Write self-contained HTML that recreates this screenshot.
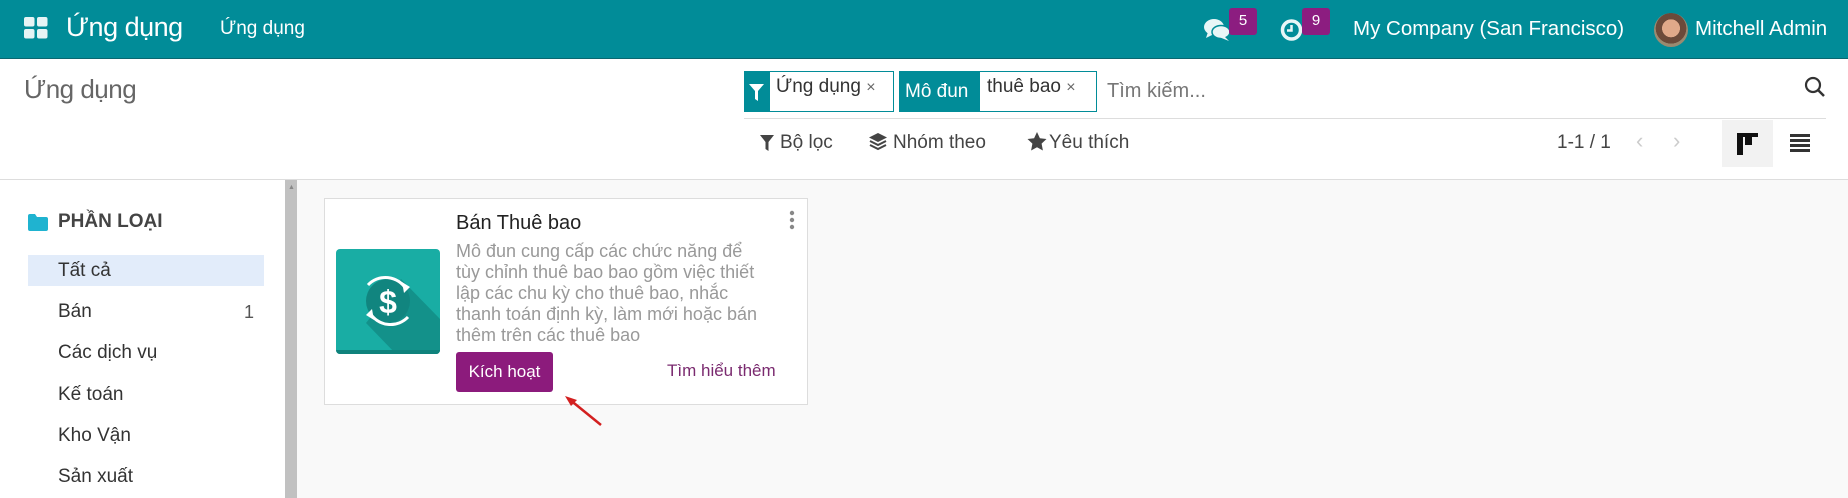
<!DOCTYPE html>
<html><head><meta charset="utf-8"><style>
*{box-sizing:border-box;margin:0;padding:0}
body{width:1848px;height:498px;overflow:hidden;font-family:"Liberation Sans","Noto Sans CJK SC",sans-serif;background:#f9f9f9;position:relative;color:#444}
.a{position:absolute;white-space:nowrap}
#nav{left:0;top:0;width:1848px;height:59px;background:#018c98;border-bottom:1px solid #0a6770}
.w{color:#fff}
.badge{background:#8c1d80;color:#fff;font-size:15px;text-align:center;border-radius:3px;line-height:26px;width:28px;height:27px}
#cp{left:0;top:59px;width:1848px;height:121px;background:#fff;border-bottom:1px solid #ddd}
.side{left:0;top:180px;width:285px;height:318px;background:#fff}
.it{left:58px;font-size:19px;color:#333}
</style></head><body>
<div class="a" id="nav"></div>
<svg class="a" style="left:24px;top:17px" width="24" height="22"><rect x="0" y="0" width="10.5" height="9.5" rx="2" fill="#e6f4f5"/><rect x="13" y="0" width="10.5" height="9.5" rx="2" fill="#e6f4f5"/><rect x="0" y="12" width="10.5" height="9.5" rx="2" fill="#e6f4f5"/><rect x="13" y="12" width="10.5" height="9.5" rx="2" fill="#e6f4f5"/></svg>
<div class="a w" style="left:66px;top:12px;font-size:27px;letter-spacing:-0.5px">Ứng dụng</div>
<div class="a w" style="left:220px;top:18px;font-size:19px">Ứng dụng</div>
<svg class="a" style="left:1204px;top:17px" width="28" height="25"><ellipse cx="10" cy="10" rx="10" ry="8" fill="#e8f6f7"/><path d="M4 15 L2 21 L10 17Z" fill="#e8f6f7"/><ellipse cx="17" cy="15" rx="9" ry="6.5" fill="#e8f6f7" stroke="#018c98" stroke-width="1.5"/><path d="M20 19 L25 24 L15 20Z" fill="#e8f6f7"/></svg>
<div class="a badge" style="left:1229px;top:8px">5</div>
<svg class="a" style="left:1280px;top:18px" width="24" height="24"><circle cx="11.5" cy="12" r="9" fill="none" stroke="#e8f6f7" stroke-width="3.5"/><path d="M11.5 7 V12.5 H7" stroke="#e8f6f7" stroke-width="2.5" fill="none"/></svg>
<div class="a badge" style="left:1302px;top:8px">9</div>
<div class="a w" style="left:1353px;top:17px;font-size:20.5px">My Company (San Francisco)</div>
<div class="a" style="left:1654px;top:13px;width:34px;height:34px;border-radius:50%;background:radial-gradient(circle at 50% 45%,#e0a98a 0 35%,#6b4a3a 36% 60%,#9a8a70 61%)"></div>
<div class="a w" style="left:1695px;top:17px;font-size:20.5px">Mitchell Admin</div>

<div class="a" id="cp"></div>
<div class="a" style="left:24px;top:74px;font-size:26px;color:#666;letter-spacing:-0.5px">Ứng dụng</div>
<div class="a" style="left:744px;top:71px;width:25px;height:41px;background:#018c98"></div>
<svg class="a" style="left:749px;top:84px" width="15" height="17"><path d="M0 0H15L9 7V17L6 15V7Z" fill="#fff"/></svg>
<div class="a" style="left:769px;top:71px;width:125px;height:41px;border:1px solid #018c98;background:#fff"></div>
<div class="a" style="left:776px;top:76px;font-size:19px;color:#333">Ứng dụng <span style="font-size:16px;color:#666">×</span></div>
<div class="a" style="left:899px;top:71px;width:80px;height:41px;background:#018c98"></div>
<div class="a" style="left:905px;top:81px;font-size:19px;color:#fff">Mô đun</div>
<div class="a" style="left:979px;top:71px;width:118px;height:41px;border:1px solid #018c98;background:#fff"></div>
<div class="a" style="left:987px;top:76px;font-size:19px;color:#333">thuê bao <span style="font-size:16px;color:#666">×</span></div>
<div class="a" style="left:1107px;top:80px;font-size:20px;color:#777">Tìm kiếm...</div>
<svg class="a" style="left:1804px;top:76px" width="22" height="22"><circle cx="9" cy="9" r="7" fill="none" stroke="#333" stroke-width="2.2"/><path d="M14 14L20 20" stroke="#333" stroke-width="2.5"/></svg>
<div class="a" style="left:744px;top:118px;width:1082px;height:1px;background:#ddd"></div>
<svg class="a" style="left:760px;top:135px" width="14" height="16"><path d="M0 0H14L8.5 7V16L5.5 14V7Z" fill="#444"/></svg>
<div class="a" style="left:780px;top:132px;font-size:19px;color:#444">Bộ lọc</div>
<svg class="a" style="left:868px;top:132px" width="20" height="20"><path d="M10 1L19 5.5L10 10L1 5.5Z" fill="#444"/><path d="M2 9L10 13L18 9M2 13L10 17L18 13" stroke="#444" stroke-width="2" fill="none"/></svg>
<div class="a" style="left:893px;top:132px;font-size:19px;color:#444">Nhóm theo</div>
<svg class="a" style="left:1027px;top:132px" width="20" height="19"><path d="M10 0L12.9 6.2L19.5 7L14.6 11.6L15.9 18.5L10 15.2L4.1 18.5L5.4 11.6L0.5 7L7.1 6.2Z" fill="#444"/></svg>
<div class="a" style="left:1049px;top:132px;font-size:19px;color:#444">Yêu thích</div>
<div class="a" style="left:1557px;top:132px;font-size:19px;color:#444">1-1 / 1</div>
<div class="a" style="left:1636px;top:128px;font-size:22px;color:#ccc">‹</div>
<div class="a" style="left:1673px;top:128px;font-size:22px;color:#ccc">›</div>
<div class="a" style="left:1722px;top:120px;width:51px;height:47px;background:#f2f2f2"></div>
<svg class="a" style="left:1737px;top:133px" width="21" height="22"><rect x="0" y="0" width="21" height="4" fill="#111"/><rect x="0" y="0" width="6" height="22" fill="#111"/><rect x="8" y="0" width="7" height="12" fill="#111"/></svg>
<svg class="a" style="left:1790px;top:134px" width="20" height="18"><rect y="0" width="20" height="3" fill="#333"/><rect y="5" width="20" height="3" fill="#333"/><rect y="10" width="20" height="3" fill="#333"/><rect y="15" width="20" height="3" fill="#333"/></svg>

<div class="a side"></div>
<div class="a" style="left:285px;top:180px;width:12px;height:318px;background:#c1c1c1"></div>
<div class="a" style="left:288px;top:184px;font-size:7px;color:#888">▲</div>
<svg class="a" style="left:28px;top:214px" width="20" height="17"><path d="M0 2Q0 0 2 0H7L9 3H18Q20 3 20 5V15Q20 17 18 17H2Q0 17 0 15Z" fill="#1fb3d0"/></svg>
<div class="a" style="left:58px;top:211px;font-size:19px;font-weight:bold;color:#444">PHẦN LOẠI</div>
<div class="a" style="left:28px;top:255px;width:236px;height:31px;background:#e2ecfa"></div>
<div class="a it" style="top:260px">Tất cả</div>
<div class="a it" style="top:301px">Bán</div>
<div class="a" style="left:244px;top:302px;font-size:18px;color:#555">1</div>
<div class="a it" style="top:342px">Các dịch vụ</div>
<div class="a it" style="top:384px">Kế toán</div>
<div class="a it" style="top:425px">Kho Vận</div>
<div class="a it" style="top:466px">Sản xuất</div>

<div class="a" style="left:324px;top:198px;width:484px;height:207px;background:#fff;border:1px solid #ddd"></div>
<svg class="a" style="left:336px;top:249px" width="104" height="105"><defs><clipPath id="c"><rect width="104" height="105" rx="4"/></clipPath></defs><g clip-path="url(#c)"><rect width="104" height="105" fill="#19ada4"/><path d="M30 74L65 30L104 70V105H60Z" fill="#13918a"/><rect y="101" width="104" height="4" fill="#0f827c"/><circle cx="52" cy="52" r="22" fill="#11857f"/><path d="M70 40A24 24 0 0 0 32 36" stroke="#fff" stroke-width="3" fill="none"/><path d="M34 64A24 24 0 0 0 72 68" stroke="#fff" stroke-width="3" fill="none"/><path d="M66 33L74 38L68 44Z" fill="#fff"/><path d="M38 71L30 66L36 60Z" fill="#fff"/><text x="52" y="64" text-anchor="middle" font-family="Liberation Sans" font-weight="bold" font-size="32" fill="#fff">$</text></g></svg>
<div class="a" style="left:456px;top:212px;font-size:20px;color:#222">Bán Thuê bao</div>
<div class="a" style="left:456px;top:241px;font-size:18px;line-height:21px;color:#999">Mô đun cung cấp các chức năng để<br>tùy chỉnh thuê bao bao gồm việc thiết<br>lập các chu kỳ cho thuê bao, nhắc<br>thanh toán định kỳ, làm mới hoặc bán<br>thêm trên các thuê bao</div>
<div class="a" style="left:456px;top:352px;width:97px;height:40px;background:#8c1b7c;border-radius:3px;color:#fff;font-size:17px;line-height:40px;text-align:center">Kích hoạt</div>
<div class="a" style="left:667px;top:361px;font-size:17px;color:#7a2a6f">Tìm hiểu thêm</div>
<svg class="a" style="left:789px;top:210px" width="6" height="20"><circle cx="3" cy="3" r="2.2" fill="#888"/><circle cx="3" cy="10" r="2.2" fill="#888"/><circle cx="3" cy="17" r="2.2" fill="#888"/></svg>
<svg class="a" style="left:560px;top:390px" width="50" height="40"><path d="M41 35L9 9" stroke="#d32020" stroke-width="2.5"/><path d="M5 6L17 10L11 16Z" fill="#d32020"/></svg>
</body></html>
